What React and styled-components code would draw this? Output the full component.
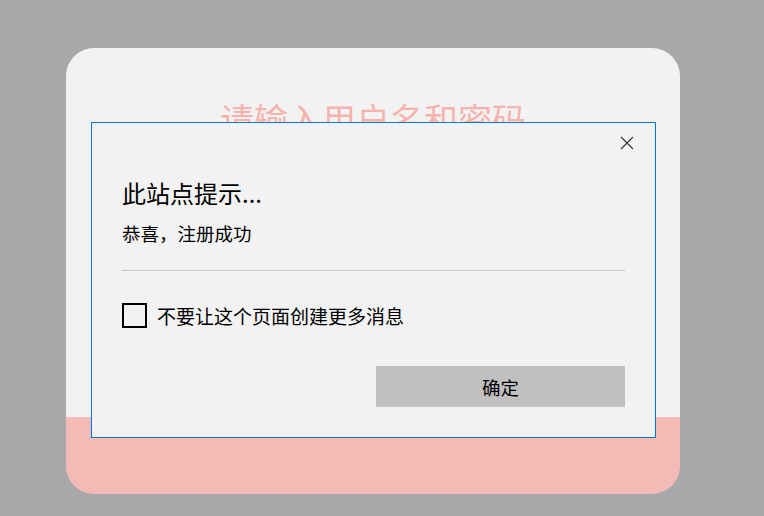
import React from "react";
import styled, { createGlobalStyle } from "styled-components";

const GlobalStyle = createGlobalStyle`
  html, body {
    margin: 0;
    padding: 0;
    background: #a9a9ab;
    font-family: "Noto Sans CJK SC", "Noto Sans", sans-serif;
  }
`;

const Page = styled.div`
  position: relative;
  width: 764px;
  height: 516px;
  padding: 48px 0 0 66px;
  box-sizing: border-box;
  overflow: hidden;
`;

const Card = styled.div`
  width: 614px;
  height: 446px;
  border-radius: 28px;
  overflow: hidden;
  display: flex;
  flex-direction: column;
`;

const CardTop = styled.div`
  flex: 1;
  background: #f2f2f2;
  padding-top: 51px;
  text-align: center;
`;

const CardTitle = styled.h1`
  margin: 0;
  font-size: 34px;
  line-height: 40px;
  font-weight: 400;
  color: #f6b2ad;
`;

const CardBottom = styled.div`
  height: 77px;
  background: #f4bbb6;
`;

const Dialog = styled.div`
  position: absolute;
  left: 91px;
  top: 122px;
  width: 565px;
  height: 316px;
  box-sizing: border-box;
  border: 1px solid #0078d7;
  background: #f2f2f2;
  padding: 0 30px;
  display: flex;
  flex-direction: column;
`;

const CloseRow = styled.div`
  height: 54px;
  display: flex;
  justify-content: flex-end;
  align-items: flex-start;
`;

const CloseBtn = styled.button`
  margin: 8px -14px 0 0;
  width: 24px;
  height: 24px;
  padding: 0;
  border: none;
  background: transparent;
  display: flex;
  align-items: center;
  justify-content: center;
  cursor: pointer;
`;

const Title = styled.div`
  font-size: 24px;
  line-height: 31px;
  color: #000;
`;

const Message = styled.div`
  margin-top: 13px;
  font-size: 18.5px;
  line-height: 24px;
  color: #000;
`;

const Divider = styled.div`
  margin-top: 25px;
  height: 1px;
  background: #c6c6c6;
`;

const CheckRow = styled.label`
  margin-top: 32px;
  height: 25px;
  display: flex;
  align-items: center;
  gap: 10px;
  font-size: 19px;
  color: #000;
`;

const Box = styled.span`
  width: 25px;
  height: 25px;
  box-sizing: border-box;
  border: 2.5px solid #000;
  background: #f2f2f2;
`;

const ButtonRow = styled.div`
  margin-top: 38px;
  display: flex;
  justify-content: flex-end;
`;

const OkButton = styled.button`
  width: 249px;
  height: 41px;
  border: none;
  background: #c0c0c0;
  font-family: "Noto Sans CJK SC", "Noto Sans", sans-serif;
  font-size: 18.5px;
  color: #000;
  cursor: pointer;
`;

const App = () => {
  return (
    <Page>
      <GlobalStyle />
      <Card>
        <CardTop>
          <CardTitle>请输入用户名和密码</CardTitle>
        </CardTop>
        <CardBottom />
      </Card>
      <Dialog>
        <CloseRow>
          <CloseBtn aria-label="close">
            <svg width="14" height="14" viewBox="0 0 14 14">
              <path d="M1 1 L13 13 M13 1 L1 13" stroke="#333" strokeWidth="1.1" fill="none" />
            </svg>
          </CloseBtn>
        </CloseRow>
        <Title>此站点提示...</Title>
        <Message>恭喜，注册成功</Message>
        <Divider />
        <CheckRow>
          <Box />
          不要让这个页面创建更多消息
        </CheckRow>
        <ButtonRow>
          <OkButton>确定</OkButton>
        </ButtonRow>
      </Dialog>
    </Page>
  );
};

export default App;
